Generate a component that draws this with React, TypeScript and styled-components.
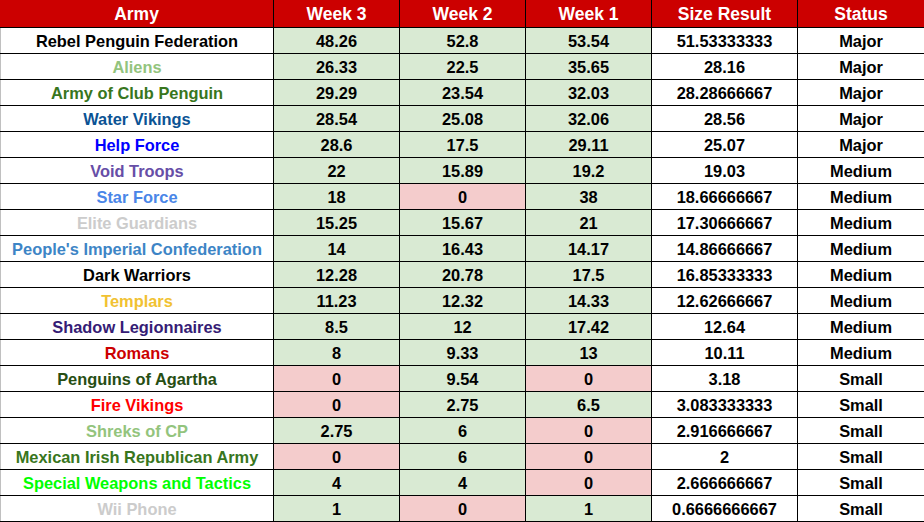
import React from "react";
import styled, { createGlobalStyle } from "styled-components";

type Army = {
    name: string;
    color: string;
    weeks: string[];
    size: string;
    status: string;
};

const armies: Army[] = [
    { name: "Rebel Penguin Federation", color: "#000000", weeks: ["48.26", "52.8", "53.54"], size: "51.53333333", status: "Major" },
    { name: "Aliens", color: "#93c47d", weeks: ["26.33", "22.5", "35.65"], size: "28.16", status: "Major" },
    { name: "Army of Club Penguin", color: "#38761d", weeks: ["29.29", "23.54", "32.03"], size: "28.28666667", status: "Major" },
    { name: "Water Vikings", color: "#0b5394", weeks: ["28.54", "25.08", "32.06"], size: "28.56", status: "Major" },
    { name: "Help Force", color: "#0000ff", weeks: ["28.6", "17.5", "29.11"], size: "25.07", status: "Major" },
    { name: "Void Troops", color: "#674ea7", weeks: ["22", "15.89", "19.2"], size: "19.03", status: "Medium" },
    { name: "Star Force", color: "#4a86e8", weeks: ["18", "0", "38"], size: "18.66666667", status: "Medium" },
    { name: "Elite Guardians", color: "#cccccc", weeks: ["15.25", "15.67", "21"], size: "17.30666667", status: "Medium" },
    { name: "People's Imperial Confederation", color: "#3d85c6", weeks: ["14", "16.43", "14.17"], size: "14.86666667", status: "Medium" },
    { name: "Dark Warriors", color: "#000000", weeks: ["12.28", "20.78", "17.5"], size: "16.85333333", status: "Medium" },
    { name: "Templars", color: "#f1c232", weeks: ["11.23", "12.32", "14.33"], size: "12.62666667", status: "Medium" },
    { name: "Shadow Legionnaires", color: "#351c75", weeks: ["8.5", "12", "17.42"], size: "12.64", status: "Medium" },
    { name: "Romans", color: "#cc0000", weeks: ["8", "9.33", "13"], size: "10.11", status: "Medium" },
    { name: "Penguins of Agartha", color: "#274e13", weeks: ["0", "9.54", "0"], size: "3.18", status: "Small" },
    { name: "Fire Vikings", color: "#ff0000", weeks: ["0", "2.75", "6.5"], size: "3.083333333", status: "Small" },
    { name: "Shreks of CP", color: "#93c47d", weeks: ["2.75", "6", "0"], size: "2.916666667", status: "Small" },
    { name: "Mexican Irish Republican Army", color: "#38761d", weeks: ["0", "6", "0"], size: "2", status: "Small" },
    { name: "Special Weapons and Tactics", color: "#00ff00", weeks: ["4", "4", "0"], size: "2.666666667", status: "Small" },
    { name: "Wii Phone", color: "#cccccc", weeks: ["1", "0", "1"], size: "0.6666666667", status: "Small" },
];

const headers = ["Army", "Week 3", "Week 2", "Week 1", "Size Result", "Status"];

const App = () => {
    return (
        <>
            <GlobalStyle />
            <Sheet>
                <HeaderRow>
                    {headers.map((h) => (
                        <HeaderCell key={h}>{h}</HeaderCell>
                    ))}
                </HeaderRow>
                {armies.map((a) => (
                    <Row key={a.name}>
                        <NameCell $color={a.color}>{a.name}</NameCell>
                        {a.weeks.map((w, i) => (
                            <WeekCell key={i} $empty={w === "0"}>{w}</WeekCell>
                        ))}
                        <Cell>{a.size}</Cell>
                        <Cell>{a.status}</Cell>
                    </Row>
                ))}
            </Sheet>
        </>
    );
};

const GlobalStyle = createGlobalStyle`
    body {
        margin: 0;
        background: #ffffff;
        font-family: "Liberation Sans", Arial, sans-serif;
    }
`;

const Sheet = styled.div`
    width: 924px;
    display: flex;
    flex-direction: column;
`;

const HeaderRow = styled.div`
    display: grid;
    grid-template-columns: 274px 126px 126px 126px 146px 126px;
    height: 28px;
    background-color: #cc0000;
    border-bottom: 1px solid #000000;
    box-sizing: border-box;
`;

const HeaderCell = styled.div`
    display: flex;
    align-items: center;
    justify-content: center;
    padding-top: 2px;
    color: #ffffff;
    font-weight: 700;
    font-size: 17.5px;
    border-right: 1px solid #000000;
    box-sizing: border-box;
    &:last-child {
        border-right: none;
    }
`;

const Row = styled.div`
    display: grid;
    grid-template-columns: 274px 126px 126px 126px 146px 126px;
    height: 26px;
    border-bottom: 1px solid #000000;
    box-sizing: border-box;
`;

const Cell = styled.div`
    display: flex;
    align-items: center;
    justify-content: center;
    padding-top: 2px;
    font-weight: 700;
    font-size: 16.4px;
    color: #000000;
    white-space: nowrap;
    border-right: 1px solid #000000;
    box-sizing: border-box;
    &:last-child {
        border-right: none;
    }
`;

const NameCell = styled(Cell)<{ $color: string }>`
    color: ${(p) => p.$color};
    border-left: 1px solid #c0c0c0;
`;

const WeekCell = styled(Cell)<{ $empty: boolean }>`
    background-color: ${(p) => (p.$empty ? "#f4cccc" : "#d9ead3")};
`;

export default App;
